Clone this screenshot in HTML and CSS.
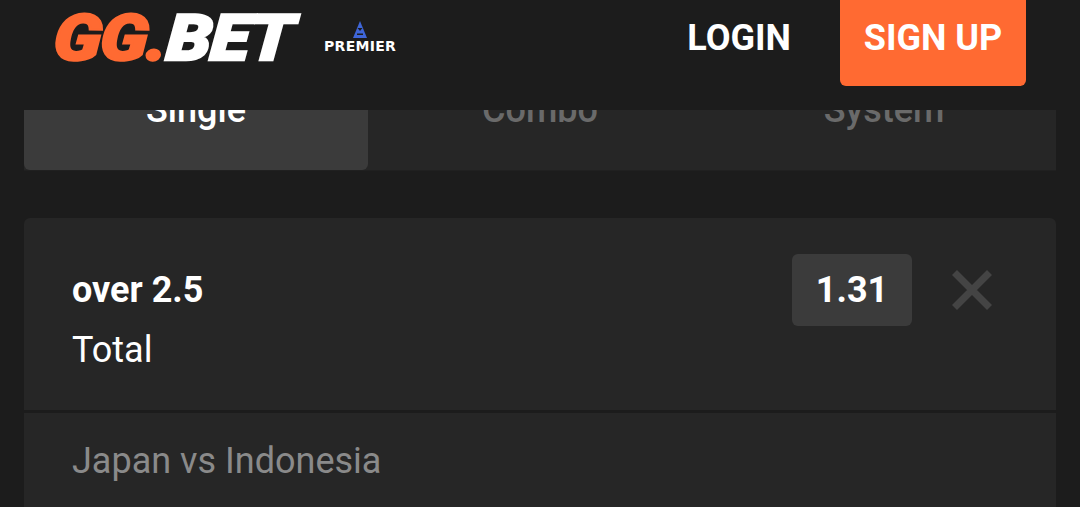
FILE: index.html
```html
<!DOCTYPE html>
<html lang="en">
  <head>
    <meta charset="UTF-8" />
    <meta name="viewport" content="width=device-width, initial-scale=1.0" />
    <title>Betslip</title>
    <link rel="stylesheet" href="styles.css">
  </head>
  <body>
    <header class="site-header">
      <div class="logo">
        <div class="logo-box">
          <span class="logo-text"><span class="logo-orange">GG.</span>BET</span>
        </div>
        <div class="premier">
          <svg class="premier-mark" width="14" height="17" viewBox="0 0 14 17" aria-hidden="true">
            <path d="M7 0 L14 17 H0 Z" fill="#3f66d8" />
            <path d="M4.5 7 H9.5 L7 10 Z M4 12.5 H10 V14 H4 Z" fill="#1c1c1c" />
          </svg>
          <span class="premier-text">PREMIER</span>
        </div>
      </div>
      <nav class="header-actions">
        <a class="login">LOGIN</a>
        <a class="signup">SIGN UP</a>
      </nav>
    </header>

    <main class="content">
      <div class="tabs">
        <div class="tab active">Single</div>
        <div class="tab">Combo</div>
        <div class="tab">System</div>
      </div>

      <section class="bet-card">
        <div class="bet-main">
          <div class="bet-info">
            <div class="bet-name">over 2.5</div>
            <div class="bet-market">Total</div>
          </div>
          <div class="odds">1.31</div>
          <svg class="remove" width="40" height="40" viewBox="0 0 40 40" aria-hidden="true">
            <path d="M2.5 2.5 L37.5 37.5 M37.5 2.5 L2.5 37.5" stroke="#444444" stroke-width="7" />
          </svg>
        </div>
        <div class="bet-match">Japan vs Indonesia</div>
      </section>
    </main>
  </body>
</html>
```

FILE: styles.css
```css
:root {
  --page-bg: #1c1c1c;
  --card-bg: #262626;
  --raised-bg: #3b3b3b;
  --orange: #ff6a32;
}
body {
  margin: 0;
  background-color: var(--page-bg);
  color: #fff;
  font-family: Roboto, sans-serif;
}
.site-header {
  position: fixed;
  top: 0;
  left: 0;
  right: 0;
  height: 110px;
  display: flex;
  justify-content: space-between;
  padding: 0 54px;
  box-sizing: border-box;
  background-color: var(--page-bg);
  z-index: 10;
}
.logo {
  display: flex;
  align-items: center;
  gap: 24px;
  height: 78px;
}
.logo-box {
  width: 246px;
}
.logo-text {
  display: block;
  white-space: nowrap;
  font-size: 64px;
  font-weight: 900;
  font-style: italic;
  letter-spacing: -1px;
  line-height: 1;
  color: #fff;
  -webkit-text-stroke: 2.5px currentColor;
  transform: scaleX(1.125) skewX(-4deg);
  transform-origin: left center;
}
.logo-orange {
  color: var(--orange);
}
.premier {
  display: flex;
  flex-direction: column;
  align-items: center;
  gap: 2px;
  margin-bottom: 5px;
}
.premier-text {
  font-family: "DejaVu Sans", sans-serif;
  font-size: 14px;
  font-weight: 700;
  letter-spacing: 0.3px;
  line-height: 12px;
}
.header-actions {
  display: flex;
  align-items: flex-start;
  gap: 49px;
  font-size: 36px;
  font-weight: 700;
}
.login {
  line-height: 76px;
}
.signup {
  width: 186px;
  height: 86px;
  line-height: 76px;
  text-align: center;
  background-color: var(--orange);
  border-radius: 0 0 6px 6px;
}
.content {
  display: flex;
  flex-direction: column;
  gap: 48px;
  padding-top: 50px;
  margin: 0 24px;
}
.tabs {
  display: grid;
  grid-template-columns: repeat(3, 1fr);
  height: 120px;
  background-color: var(--card-bg);
  box-shadow: 0 1px 0 #202020;
}
.tab {
  display: flex;
  align-items: center;
  justify-content: center;
  font-size: 36px;
  font-weight: 500;
  color: #6a6a6a;
  border-radius: 0 0 6px 6px;
}
.tab.active {
  background-color: var(--raised-bg);
  color: #fff;
}
.bet-card {
  background-color: var(--card-bg);
  border-radius: 6px 6px 0 0;
}
.bet-main {
  display: flex;
  align-items: flex-start;
  height: 195px;
  box-sizing: border-box;
  padding: 36px 64px 0 48px;
  border-bottom: 3px solid #1c1c1c;
}
.bet-info {
  flex: 1;
  font-size: 36px;
  line-height: 60px;
  margin-top: 6px;
}
.bet-name {
  font-weight: 700;
}
.odds {
  width: 120px;
  height: 72px;
  line-height: 72px;
  text-align: center;
  font-size: 36px;
  font-weight: 700;
  background-color: var(--raised-bg);
  border-radius: 6px;
}
.remove {
  margin: 16px 0 0 40px;
}
.bet-match {
  padding: 18px 48px 16px;
  font-size: 36px;
  line-height: 60px;
  color: #8a8a8a;
}
```
